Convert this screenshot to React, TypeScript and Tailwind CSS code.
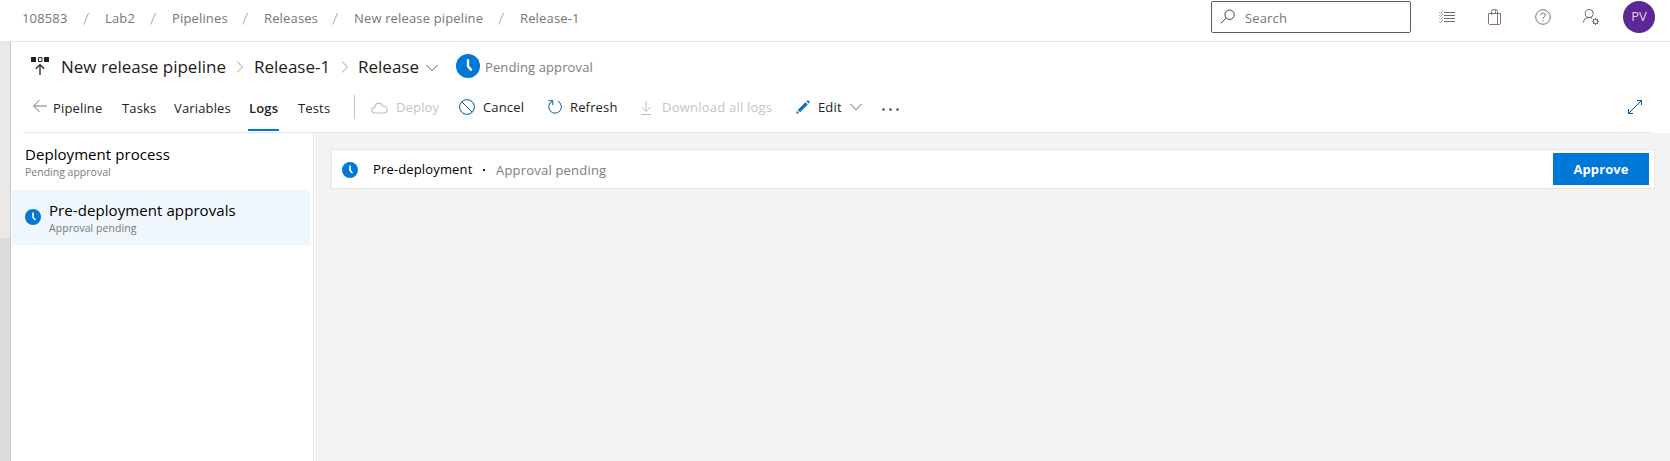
import React from 'react';

const crumbs = [
  { label: '108583', box: 'w-[61px]' },
  { label: 'Lab2', box: 'w-[45px]' },
  { label: 'Pipelines', box: 'w-[70px]' },
  { label: 'Releases', box: 'w-[68px]' },
  { label: 'New release pipeline', box: 'w-[144px]' },
  { label: 'Release-1', box: 'w-[70px]' },
];

const tabs = [
  { label: 'Pipeline', box: 'w-[69px]' },
  { label: 'Tasks', box: 'w-[52px]' },
  { label: 'Variables', box: 'w-[75px]' },
];

function Clock({ className }: { className: string }) {
  return (
    <svg viewBox="0 0 24 24" className={`shrink-0 ${className}`} fill="none">
      <circle cx="12" cy="12" r="12" fill="#0078d7" />
      <path d="M12 5.2v7.2l3.6 4" stroke="#fff" strokeWidth="2.4" />
    </svg>
  );
}

function Chevron({ className, d }: { className: string; d: string }) {
  return (
    <svg viewBox="0 0 12 12" className={`size-3 shrink-0 ${className}`} fill="none" stroke="currentColor">
      <path d={d} />
    </svg>
  );
}

const RIGHT = 'M3 0.5L8.5 6L3 11.5';
const DOWN = 'M0.5 3L6 8.8L11.5 3';

function TopBar() {
  return (
    <header className="flex h-[42px] shrink-0 border-b border-[#e6e6e6] pl-[22px] text-[13px] tracking-[0.15px] text-[#767676]">
      <nav className="flex h-[38px] items-center whitespace-nowrap">
        {crumbs.map((c, i) => (
          <React.Fragment key={c.label}>
            <span className={`shrink-0 ${c.box}`}>{c.label}</span>
            {i < crumbs.length - 1 && (
              <svg viewBox="0 0 22 14" className="h-3.5 w-[22px] shrink-0" fill="none" stroke="#a6a6a6">
                <path d="M0.8 12.5L5.5 1" />
              </svg>
            )}
          </React.Fragment>
        ))}
      </nav>
      <div className="mt-px ml-auto flex h-8 items-center pr-[15px]">
        <div className="mr-7 flex h-8 w-[200px] items-center rounded-[2px] border border-[#605e5c] pl-2">
          <svg viewBox="0 0 16 16" className="mr-[9px] size-4" fill="none" stroke="#444">
            <circle cx="9.6" cy="5.7" r="4.7" />
            <path d="M6.2 9.1L0.8 14.3" />
          </svg>
          <span className="pt-[3px]">Search</span>
        </div>
        <svg viewBox="0 0 16 16" className="mr-8 size-4" fill="none" stroke="#6a6a6a">
          <path d="M5 3.5h11M5 6.5h11M5 9.5h11M5 12.5h11" />
          <path d="M0.3 3.2l1.2 1.2L4 2M0.3 6.2l1.2 1.2L4 5M0.3 9.2l1.2 1.2L4 8M0.3 12.2l1.2 1.2L4 11" strokeWidth=".7" />
        </svg>
        <svg viewBox="0 0 16 16" className="mr-8 size-4" fill="none" stroke="#777">
          <path d="M1.5 4.5h12v10l-1 1H2.5l-1-1z" />
          <path d="M4.5 6V2.5Q4.5 0.5 6.5 0.5t2 2V4.5M6.5 0.5h2Q10.5 0.5 10.5 2.5v2" />
          <path d="M10.5 5v10" stroke="#b04fb8" />
        </svg>
        <svg viewBox="0 0 16 16" className="mr-8 size-4" fill="none" stroke="#777">
          <circle cx="8" cy="8" r="7.3" />
          <path d="M5.8 6.3Q5.8 4 8 4t2.2 2.1Q10.2 7.2 9 8 8 8.7 8 9.8M8 11v1.2" />
        </svg>
        <svg viewBox="0 0 16 16" className="mr-6 size-4" fill="none" stroke="#666">
          <circle cx="6.3" cy="4.5" r="4" />
          <path d="M0.5 13.5Q0.8 8.5 6.3 8.5 8 8.5 9.2 9.3" />
          <circle cx="12.5" cy="12.5" r="2.2" />
          <path d="M12.5 9v1.5M12.5 14.5V16M9 12.5h1.5M14.5 12.5H16M10 10l1 1M14 14l1 1M15 10l-1 1M11 14l-1 1" />
        </svg>
        <div className="flex size-8 items-center justify-center rounded-full bg-[#5c2893] text-[13px] tracking-normal text-[#e0d3ee]">
          PV
        </div>
      </div>
    </header>
  );
}

function TitleRow() {
  return (
    <div className="flex h-[48px] items-center pt-0.5 pl-5 text-[17px] whitespace-nowrap text-[#1c1c1c]">
      <svg viewBox="0 0 18 18" className="-mt-0.5 mr-3 h-[18px] w-[18px] shrink-0" fill="none" stroke="#222">
        <path d="M0 0h5v5H0zM13 0h5v5h-5z" fill="#222" stroke="none" />
        <path d="M7.5 0.7h3.5v3.8H7.5z" />
        <path d="M9 18V8M4.8 11.8L9 7.6l4.2 4.2" strokeWidth="1.3" />
      </svg>
      <span className="w-[173px] shrink-0">New release pipeline</span>
      <Chevron d={RIGHT} className="mr-2 text-[#a0a0a0]" />
      <span className="w-[85px] shrink-0">Release-1</span>
      <Chevron d={RIGHT} className="mr-[7px] text-[#a0a0a0]" />
      <span className="w-[68px] shrink-0">Release</span>
      <Chevron d={DOWN} className="mt-0.5 mr-[18px] text-[#666]" />
      <Clock className="-mt-0.5 mr-[5px] size-6" />
      <span className="pt-0.5 text-[13px] tracking-[0.12px] text-[#7d7d7d]">Pending approval</span>
    </div>
  );
}

function Toolbar() {
  return (
    <div className="ml-3 mr-[19px] flex h-[43px] border-b border-[#e6e6e6] pl-2.5 text-[13px] tracking-[0.15px] whitespace-nowrap text-[#222]">
      <svg viewBox="0 0 14 14" className="mt-[9px] mr-[6px] size-3.5 shrink-0" fill="none" stroke="#777">
        <path d="M14 7H0.8M6.5 1L0.7 7l5.8 6" />
      </svg>
      {tabs.map((t) => (
        <span key={t.label} className={`shrink-0 pt-[9px] ${t.box}`}>{t.label}</span>
      ))}
      <span className="-ml-px mr-[19px] h-[41px] w-[31px] shrink-0 border-b-2 border-[#0078d7] pt-[9px] pl-px font-semibold">Logs</span>
      <span className="w-14 shrink-0 pt-[9px]">Tests</span>
      <span className="mt-[5px] mr-4 h-6 w-px shrink-0 bg-[#c4c4c4]" />
      <div className="flex h-9 items-center">
        <svg viewBox="0 0 17 12" className="mr-2 h-3 w-[17px] shrink-0" fill="none" stroke="#c0c0c0" strokeWidth="1.2">
          <path d="M4 11Q0.7 11 0.7 8.2T3.7 5.3Q4.3 1.2 7.7 1.2q2.8 0 3.7 2.8Q15.8 3.8 16.2 7.5 16.2 11 12.8 11z" />
        </svg>
        <span className="w-[63px] shrink-0 text-[#c4c4c4]">Deploy</span>
        <svg viewBox="0 0 16 16" className="-mt-0.5 mr-2 size-4 shrink-0" fill="none" stroke="#005a9e">
          <circle cx="8" cy="8" r="7.4" />
          <path d="M2.8 2.8l10.4 10.4" />
        </svg>
        <span className="w-[65px] shrink-0">Cancel</span>
        <svg viewBox="0 0 14 14" className="-mt-0.5 mr-2 size-3.5 shrink-0" fill="none" stroke="#005a9e">
          <path d="M0.5 0.7h4.3V5M4.3 1.2A6.3 6.3 0 1 0 9.8 1.2" />
        </svg>
        <span className="w-[70px] shrink-0">Refresh</span>
        <svg viewBox="0 0 12 14" className="mr-2.5 h-3.5 w-3 shrink-0" fill="none" stroke="#bdbdbd">
          <path d="M6 0v10M1.5 6L6 10.5 10.5 6M1 13.5h10" />
        </svg>
        <span className="w-[134px] shrink-0 tracking-[0.22px] text-[#c4c4c4]">Download all logs</span>
        <svg viewBox="0 0 14 14" className="-mt-0.5 mr-2 size-3.5 shrink-0" fill="#106ebe">
          <path d="M0.2 13.8l.7-3 2.3 2.3zM1.7 9.9l7.7-7.7 2.4 2.4-7.7 7.7zM10.4 1.3l.9-.9q.8-.5 1.7.4t.5 1.8l-.8.9z" />
        </svg>
        <span className="w-8 shrink-0">Edit</span>
        <Chevron d={DOWN} className="-mt-0.5 text-[#666]" />
        <svg viewBox="0 0 18 3" className="mt-0.5 ml-5 h-[3px] w-[18px] shrink-0" fill="#222">
          <path d="M0.5 0.5h2v2h-2zM7.5 0.5h2v2h-2zM14.5 0.5h2v2h-2z" />
        </svg>
      </div>
      <svg viewBox="0 0 14 14" className="mt-[10px] mr-[9px] ml-auto size-3.5 shrink-0" fill="none" stroke="#005a9e">
        <path d="M0.8 13.2L13.2 0.8M9 0.5h4.5V5M0.5 9v4.5H5" />
      </svg>
    </div>
  );
}

export default function App() {
  return (
    <div className="flex h-[461px] w-[1670px] flex-col overflow-hidden bg-white font-['Open_Sans','Noto_Sans',sans-serif]">
      <TopBar />
      <div className="flex min-h-0 grow">
        <div className="flex w-[11px] shrink-0 flex-col border-r border-[#c8c8c8]">
          <div className="h-[196px] bg-[#e9e9e9]" />
          <div className="grow bg-[#dcdcdc]" />
        </div>
        <main className="flex min-w-0 grow flex-col">
          <TitleRow />
          <Toolbar />
          <div className="flex grow">
            <aside className="w-[303px] shrink-0 border-r border-[#e6e6e6] pl-px leading-none whitespace-nowrap">
              <div className="h-[57px] pt-3 pl-[13px]">
                <div className="text-[15px] leading-[18px] tracking-[0.06px] text-black">Deployment process</div>
                <div className="pt-0.5 text-[10.5px] leading-[15px] text-[#7a7a7a]">Pending approval</div>
              </div>
              <div className="flex h-[55px] w-[298px] items-center bg-[#eff6fc] pl-[13px]">
                <Clock className="-mt-0.5 mr-2 size-4" />
                <div className="pt-0.5">
                  <div className="text-[15px] leading-[18px] tracking-[0.08px] text-black">Pre-deployment approvals</div>
                  <div className="pt-0.5 text-[10.5px] leading-[15px] tracking-[0.06px] text-[#7a7a7a]">Approval pending</div>
                </div>
              </div>
            </aside>
            <section className="ml-px grow bg-[#f3f3f3] pt-4 pr-[15px] pl-4">
              <div className="flex h-10 items-center border border-[#e6e6e6] bg-white pr-[5px] pl-[10px] text-[13px] tracking-[0.15px] whitespace-nowrap">
                <Clock className="mt-0.5 mr-[15px] size-4" />
                <span className="w-[110px] shrink-0 pt-px text-black">Pre-deployment</span>
                <span className="mt-0.5 mr-[11px] size-[2px] bg-[#222]" />
                <span className="pt-[3px] tracking-[0.2px] text-[#7d7d7d]">Approval pending</span>
                <button className="ml-auto h-8 w-24 bg-[#0078d7] pt-px font-bold tracking-[0.08px] text-white">Approve</button>
              </div>
            </section>
          </div>
        </main>
      </div>
    </div>
  );
}
